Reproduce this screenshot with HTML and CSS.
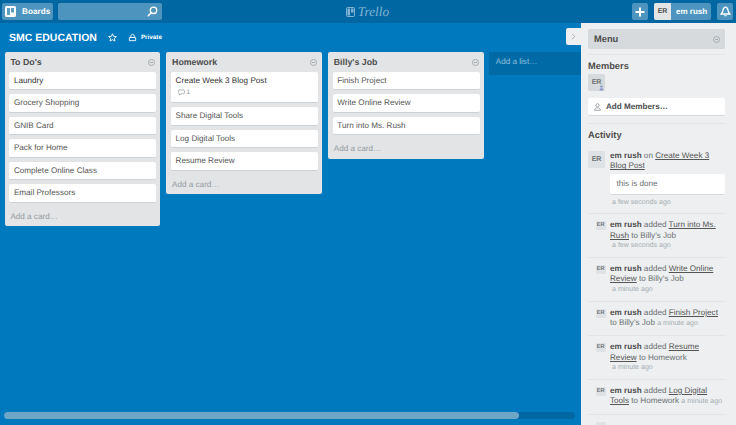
FILE: index.html
```html
<!DOCTYPE html>
<html lang="en">
<head>
<meta charset="utf-8">
<title>SMC EDUCATION on Trello</title>
<link rel="stylesheet" href="styles.css">
</head>
<body>
<header class="topbar">
  <div class="top-left">
    <div class="hbtn boards-btn">
      <svg class="ic" width="11" height="11" viewBox="0 0 11 11"><rect width="11" height="11" rx="1.5" fill="#fff"/><rect x="2" y="2" width="3" height="7" fill="#5f9dc2"/><rect x="6" y="2" width="3" height="4.5" fill="#5f9dc2"/></svg>
      <span>Boards</span>
    </div>
    <div class="search">
      <svg width="11" height="11" viewBox="0 0 11 11"><circle cx="6.5" cy="4.3" r="3.2" fill="none" stroke="#fff" stroke-width="1.4"/><path d="M4.2 6.7 1.3 9.7" stroke="#fff" stroke-width="1.6" stroke-linecap="round"/></svg>
    </div>
  </div>
  <div class="logo">
    <svg width="9" height="10" viewBox="0 0 9 10"><rect x=".5" y=".5" width="8" height="9" rx="1" fill="none" stroke="#82b4d3"/><rect x="1.500" y="1.500" width="2.500" height="7" fill="#82b4d3"/><rect x="5" y="1.500" width="2.500" height="4" fill="#82b4d3"/></svg>
    <span class="logo-word">Trello</span>
  </div>
  <div class="top-right">
    <div class="hbtn square">
      <svg width="10" height="10" viewBox="0 0 10 10"><path d="M5 .5v9M.5 5h9" stroke="#fff" stroke-width="2"/></svg>
    </div>
    <div class="hbtn user">
      <span class="user-av">ER</span>
      <span class="user-name">em rush</span>
    </div>
    <div class="hbtn square">
      <svg width="11" height="11" viewBox="0 0 11 11"><path d="M5.5 1.2C3.9 1.2 3.3 2.6 3 4.4 2.8 5.8 2 7 1.2 8h8.6C9 7 8.200 5.800 8 4.400 7.700 2.600 7.100 1.200 5.500 1.200Z" fill="none" stroke="#fff" stroke-width="1.3"/><path d="M4.300 9.200h2.400v1H4.300z" fill="#fff"/></svg>
    </div>
  </div>
</header>

<main class="board">
  <div class="board-head">
    <h1 class="board-title">SMC EDUCATION</h1>
    <svg class="star" width="9" height="9" viewBox="0 0 10 10"><path d="M5 .9 6.200 3.700 9.300 4 7 6 7.700 9 5 7.400 2.300 9 3 6 .7 4 3.800 3.700Z" fill="none" stroke="#fff" stroke-width="1"/></svg>
    <svg class="lock" width="9" height="9" viewBox="0 0 10 10"><path d="M1.500 8.500V5h7v3.500ZM3 5 C3 2 4 1.500 5 1.500S7 2 7 5" fill="none" stroke="#fff" stroke-width="1"/></svg>
    <span class="private">Private</span>
  </div>

  <div class="lists">
    <section class="list">
      <div class="list-head"><h2>To Do's</h2><span class="circle"></span></div>
      <div class="card dark">Laundry</div>
      <div class="card">Grocery Shopping</div>
      <div class="card">GNIB Card</div>
      <div class="card">Pack for Home</div>
      <div class="card">Complete Online Class</div>
      <div class="card">Email Professors</div>
      <div class="add-card">Add a card…</div>
    </section>
    <section class="list">
      <div class="list-head"><h2>Homework</h2><span class="circle"></span></div>
      <div class="card dark has-badge">Create Week 3 Blog Post
        <div class="badge">
          <svg width="7" height="7" viewBox="0 0 8 8"><path d="M1.800 1h4.400C7 1 7.500 1.600 7.500 2.500v1.500C7.500 5 7 5.500 6.200 5.500H3.500L1.800 7V5.500C1 5.500.5 5 .5 4V2.500C.5 1.600 1 1 1.800 1Z" fill="none" stroke="#8d9397" stroke-width=".8"/></svg>
          <span>1</span>
        </div>
      </div>
      <div class="card">Share Digital Tools</div>
      <div class="card">Log Digital Tools</div>
      <div class="card">Resume Review</div>
      <div class="add-card">Add a card…</div>
    </section>
    <section class="list">
      <div class="list-head"><h2>Billy's Job</h2><span class="circle"></span></div>
      <div class="card">Finish Project</div>
      <div class="card">Write Online Review</div>
      <div class="card">Turn into Ms. Rush</div>
      <div class="add-card">Add a card…</div>
    </section>
    <div class="add-list">Add a list…</div>
  </div>

  <div class="scroll-track"><div class="scroll-thumb"></div></div>
</main>

<aside class="menu">
  <div class="menu-tab">
    <svg width="5" height="7" viewBox="0 0 5 7"><path d="M1 .8 3.800 3.500 1 6.200" fill="none" stroke="#a5acb0" stroke-width=".9"/></svg>
  </div>
  <div class="menu-head"><span>Menu</span><span class="circle"></span></div>
  <hr class="rule first-rule">
  <h3 class="members-title">Members</h3>
  <div class="member-av">ER
    <svg class="member-mark" width="5" height="6" viewBox="0 0 5 6"><circle cx="2.500" cy="1.500" r="1.200" fill="#8d9bc9"/><path d="M.5 5.500C.5 3.800 1.500 3.200 2.500 3.200S4.500 3.800 4.500 5.500Z" fill="#8d9bc9"/></svg>
  </div>
  <div class="add-members">
    <svg width="7" height="8" viewBox="0 0 7 8"><circle cx="3.500" cy="2.300" r="1.600" fill="none" stroke="#8d9397" stroke-width=".8"/><path d="M.6 7.300C.6 5.300 2 4.800 3.500 4.800S6.400 5.300 6.400 7.300Z" fill="none" stroke="#8d9397" stroke-width=".8"/></svg>
    <span>Add Members…</span>
  </div>
  <hr class="rule after-add">
  <h3 class="activity-title">Activity</h3>

  <div class="act act-first">
    <span class="av big">ER</span>
    <div class="act-body">
      <p><b>em rush</b> on <u>Create Week 3 Blog Post</u></p>
      <div class="comment">this is done</div>
      <p class="when block">a few seconds ago</p>
    </div>
  </div>
  <div class="act">
    <span class="av">ER</span>
    <div class="act-body">
      <p><b>em rush</b> added <u>Turn into Ms. Rush</u> to Billy's Job</p>
      <p class="when block">a few seconds ago</p>
    </div>
  </div>
  <div class="act">
    <span class="av">ER</span>
    <div class="act-body">
      <p><b>em rush</b> added <u>Write Online Review</u> to Billy's Job</p>
      <p class="when block">a minute ago</p>
    </div>
  </div>
  <div class="act">
    <span class="av">ER</span>
    <div class="act-body">
      <p><b>em rush</b> added <u>Finish Project</u> to Billy's Job <span class="when">a minute ago</span></p>
    </div>
  </div>
  <div class="act">
    <span class="av">ER</span>
    <div class="act-body">
      <p><b>em rush</b> added <u>Resume Review</u> to Homework</p>
      <p class="when block">a minute ago</p>
    </div>
  </div>
  <div class="act">
    <span class="av">ER</span>
    <div class="act-body">
      <p><b>em rush</b> added <u>Log Digital Tools</u> to Homework <span class="when">a minute ago</span></p>
    </div>
  </div>
  <div class="act act-clipped"><span class="av"></span></div>
</aside>
</body>
</html>
```
FILE: styles.css
```css
* { box-sizing: border-box; }
html, body { margin: 0; height: 100%; }
body {
  width: 736px;
  height: 425px;
  overflow: hidden;
  position: relative;
  background: #0079bf;
  font-family: "Liberation Sans", Arial, sans-serif;
  font-size: 8.15px;
  text-rendering: geometricPrecision;
  color: #4d4d4d;
  display: flex;
  flex-direction: column;
}
h1, h2, h3, p { margin: 0; }

.topbar {
  height: 23px;
  flex: none;
  background: #0067a3;
  display: grid;
  grid-template-columns: 1fr auto 1fr;
  align-items: center;
  padding: 2px 3px 2px 2px;
}
.top-left { display: flex; gap: 5px; }
.top-right { display: flex; gap: 6px; justify-content: flex-end; }
.hbtn {
  height: 17px;
  background: #4d95be;
  border-radius: 2px;
  display: flex;
  align-items: center;
  color: #fff;
  font-weight: 700;
  font-size: 8.2px;
}
.boards-btn { width: 51px; padding-left: 2px; gap: 6px; }
.boards-btn .ic { margin-left: 1px; }
.search {
  width: 104px;
  height: 17px;
  background: #4d95be;
  border-radius: 2px;
  display: flex;
  align-items: center;
  justify-content: flex-end;
  padding-right: 4px;
}
.logo { display: flex; align-items: center; gap: 3px; }
.logo-word {
  font-family: "Liberation Serif", serif;
  font-style: italic;
  font-size: 13.3px;
  line-height: 17px;
  color: #82b4d3;
}
.square { width: 16px; justify-content: center; }
.user { width: 57px; }
.user-av {
  width: 17px;
  height: 17px;
  background: #e2e4e6;
  color: #4d4d4d;
  font-size: 7px;
  display: flex;
  align-items: center;
  justify-content: center;
  border-radius: 2px 0 0 2px;
}
.user-name { margin-left: 5px; font-size: 8px; }

.board { flex: 1; position: relative; display: flex; flex-direction: column; min-height: 0; }
.board-head {
  height: 29px;
  flex: none;
  display: flex;
  align-items: center;
  padding-left: 9px;
  color: #fff;
}
.board-title { font-size: 10.5px; font-weight: 700; color: #fff; }
.star { margin-left: 11px; }
.lock { margin-left: 11px; }
.private { margin-left: 4px; font-size: 6.3px; font-weight: 700; }

.lists { flex: 1; display: flex; align-items: flex-start; gap: 5.9px; padding-left: 4.7px; }
.list {
  width: 155.8px;
  background: #e2e4e6;
  border-radius: 2px;
  padding: 0 4.2px 0 4.7px;
  flex: none;
}
.list-head {
  height: 20px;
  display: flex;
  align-items: center;
  justify-content: space-between;
  padding-left: 1px;
}
.list-head h2 { font-size: 8.8px; font-weight: 700; color: #4d4d4d; }
.circle {
  width: 7px;
  height: 7px;
  border-radius: 50%;
  border: 1px solid #a5acb0;
  position: relative;
  margin-right: 1px;
  flex: none;
}
.circle::after {
  content: "";
  position: absolute;
  left: 1px;
  right: 1px;
  top: 2px;
  height: 1px;
  background: #a5acb0;
}
.card {
  background: #fff;
  border-radius: 2px;
  border-bottom: 1px solid #ccd2d5;
  padding: 0 4.5px;
  height: 18.4px;
  line-height: 18px;
  margin-bottom: 4.1px;
  color: #555;
}
.card.dark { color: #333; }
.has-badge { height: 31.2px; }
.badge {
  display: flex;
  align-items: center;
  gap: 2px;
  margin: -2.5px 0 0 2px;
  height: 10px;
  font-size: 6.6px;
  color: #8d9397;
}
.add-card { height: 20.5px; line-height: 20px; margin: -1px 0 0 1px; color: #959b9f; padding-top: 1px; }

.add-list {
  width: 100px;
  height: 23px;
  flex: none;
  margin-left: -.5px;
  background: #006aa7;
  color: #8fc0dc;
  padding: 5px 6.5px;
  line-height: 10px;
}

.scroll-track {
  position: absolute;
  left: 4px;
  top: 389px;
  width: 571px;
  height: 7px;
  background: #0067a3;
  border-radius: 4px;
}
.scroll-thumb { width: 515px; height: 7px; background: #6ea6c7; border-radius: 4px; }

.menu {
  position: absolute;
  left: 581px;
  top: 23px;
  width: 155px;
  height: 402px;
  background: #edeff0;
  padding: 6.3px 11px 0 7px;
}
.menu-tab {
  position: absolute;
  left: -15px;
  top: 5px;
  width: 15px;
  height: 17px;
  background: #edeff0;
  border-radius: 2px 0 0 2px;
  display: flex;
  align-items: center;
  justify-content: center;
}
.menu-head {
  height: 19.7px;
  background: #d6dadc;
  border-radius: 2px;
  display: flex;
  align-items: center;
  justify-content: space-between;
  padding: 0 4px 0 6px;
  font-size: 9.3px;
  font-weight: 700;
  color: #4d4d4d;
}
.rule { border: 0; border-top: 1px solid #e2e4e6; margin: 0; }
.first-rule { margin-top: 5.2px; }
.members-title { font-size: 9.3px; font-weight: 700; color: #4d4d4d; margin-top: 5.3px; line-height: 12px; }
.member-av {
  position: relative;
  width: 17px;
  height: 17.5px;
  margin-top: 1.5px;
  background: #d6dadc;
  border-radius: 2px;
  font-size: 7px;
  font-weight: 700;
  color: #6b6f72;
  text-align: center;
  line-height: 17px;
}
.member-mark { position: absolute; right: 1px; bottom: 0; }
.add-members {
  height: 18.5px;
  margin-top: 6.2px;
  background: #fff;
  border-bottom: 1px solid #d6dadc;
  border-radius: 2px;
  display: flex;
  align-items: center;
  gap: 5px;
  padding: 1px 0 0 6px;
  font-weight: 700;
  color: #4d4d4d;
}
.after-add { margin-top: 7px; }
.activity-title { font-size: 9.3px; font-weight: 700; color: #4d4d4d; margin-top: 5px; line-height: 12px; }

.act {
  display: flex;
  padding: 5.5px 0 5.6px;
  border-bottom: 1px solid #e2e4e6;
  line-height: 10.6px;
  color: #6b6f72;
}
.act-first { margin-top: 9.5px; padding-top: 0; padding-bottom: 5px; }
.act-clipped { padding-top: 6px; }
.av {
  width: 9.5px;
  height: 9.5px;
  margin: 1px 4.5px 0 8px;
  background: #dfe2e4;
  border-radius: 1px;
  font-size: 5.6px;
  font-weight: 700;
  color: #6b6f72;
  text-align: center;
  line-height: 9.5px;
  flex: none;
}
.av.big {
  width: 17px;
  height: 17.5px;
  margin: 0 5px 0 0;
  font-size: 7px;
  line-height: 17.5px;
}
.act-body { flex: 1; min-width: 0; }
.act-body b { color: #4d4d4d; }
.act-body u { color: #555; }
.comment {
  background: #fff;
  border-bottom: 1px solid #d6dadc;
  border-radius: 2px;
  height: 20.6px;
  margin-top: 2.4px;
  padding: 0 6.5px;
  line-height: 19.6px;
}
.when { font-size: 7.05px; color: #a5acb0; }
.when.block { margin: 0 0 0 2px; }
.act-first .when.block { margin-top: 3px; }
```
